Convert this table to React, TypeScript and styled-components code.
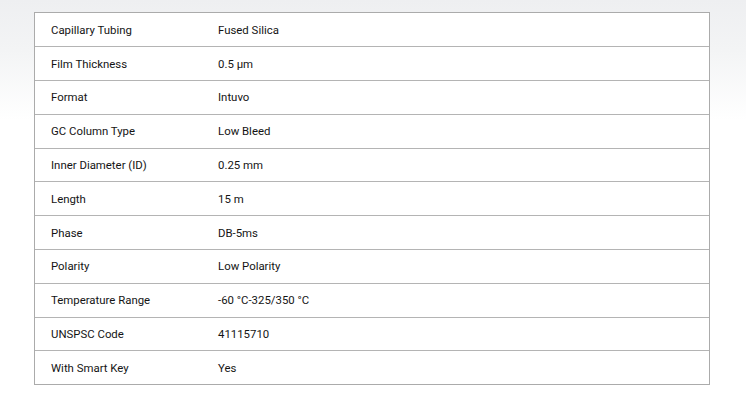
import React from "react";
import styled, { createGlobalStyle } from "styled-components";

const Global = createGlobalStyle`
  html, body { margin: 0; padding: 0; }
  body {
    width: 746px;
    height: 406px;
    overflow: hidden;
    background: linear-gradient(to bottom, #eeeff1 0px, #f3f4f5 50px, #ffffff 120px);
    font-family: Roboto, "Noto Sans", Arial, sans-serif;
  }
`;

const Page = styled.div`
  padding: 12px 0 0 34px;
`;

const Table = styled.div`
  width: 674px;
  border: 1px solid #ababab;
  background: #ffffff;
`;

const Row = styled.div`
  display: grid;
  grid-template-columns: 183px 1fr;
  align-items: center;
  height: 32.8px;
  border-top: 1px solid #b4b4b4;
  &:first-child { border-top: none; height: 33.3px; }
`;

const Label = styled.div`
  padding-left: 16px;
  font-size: 11.4px;
  color: #141414;
`;

const Value = styled.div`
  font-size: 11.4px;
  color: #141414;
`;

const rows: [string, string][] = [
  ["Capillary Tubing", "Fused Silica"],
  ["Film Thickness", "0.5 µm"],
  ["Format", "Intuvo"],
  ["GC Column Type", "Low Bleed"],
  ["Inner Diameter (ID)", "0.25 mm"],
  ["Length", "15 m"],
  ["Phase", "DB-5ms"],
  ["Polarity", "Low Polarity"],
  ["Temperature Range", "-60 °C-325/350 °C"],
  ["UNSPSC Code", "41115710"],
  ["With Smart Key", "Yes"],
];

export default function App() {
  return (
    <>
      <Global />
      <Page>
        <Table>
          {rows.map(([k, v]) => (
            <Row key={k}>
              <Label>{k}</Label>
              <Value>{v}</Value>
            </Row>
          ))}
        </Table>
      </Page>
    </>
  );
}
